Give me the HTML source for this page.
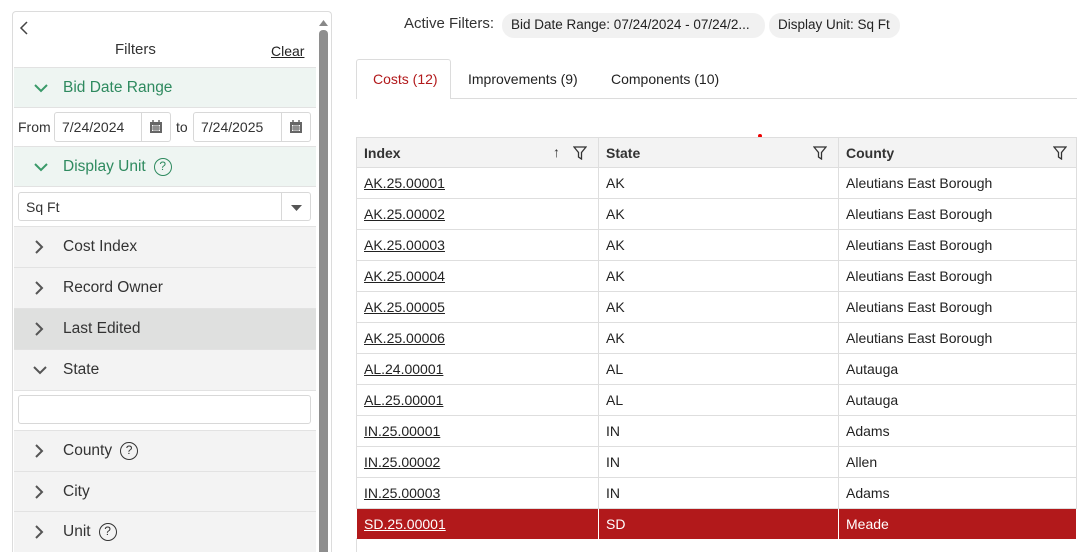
<!DOCTYPE html>
<html style="width:1077px;height:552px;overflow:hidden"><head><style>
*{box-sizing:border-box;margin:0;padding:0}
body{width:1077px;height:552px;overflow:hidden;background:#fff;font-family:"Liberation Sans",sans-serif;font-size:14px;color:#222;position:relative}
.a{position:absolute}
.side{left:12px;top:11px;width:320px;height:541px;border:1px solid #dcdcdc;border-bottom:none;border-radius:4px 4px 0 0;background:#fff}
.row{position:absolute;left:14px;width:302px;border-bottom:1px solid #e2e2e2;background:#f3f3f3;font-size:15.5px;color:#333}
.row .t{position:absolute;left:49px;top:50%;transform:translateY(-50%)}
.row svg{position:absolute;left:20px;top:50%;transform:translateY(-50%)}
.g{background:#eef5f2;color:#2e8a5f}
.w{background:#fff}
.q{display:inline-block;width:18px;height:18px;border:1.5px solid currentColor;border-radius:50%;font-size:12px;text-align:center;line-height:15px;margin-left:8px;vertical-align:1px}
.inp{position:absolute;border:1px solid #d8d8d8;border-radius:3px;background:#fff;font-size:14px}
.cal{position:absolute;right:0;top:0;bottom:0;width:29px;border-left:1px solid #d8d8d8}
table{position:absolute;left:356px;top:137px;width:721px;border-collapse:collapse;font-size:14px}
td,th{border:1px solid #dedede;height:31px;padding:0 7px;text-align:left;font-weight:normal}
th{background:#f3f3f3;height:30px;font-weight:bold;color:#333}
td a{color:#222}
tr.sel td{background:#b2191b;color:#fff;border-color:#fff}
tr.sel td a{color:#fff}
.chip{position:absolute;top:13px;height:25px;background:#f1f1f1;border-radius:12px;font-size:13.5px;padding:4px 9px;white-space:nowrap}
</style></head><body>
<div class="a side"></div>
<div class="a" style="left:318px;top:14px;width:11px;height:10px"><svg width="11" height="10"><path d="M1 9L5.5 3L10 9Z" fill="#888"/></svg></div>
<div class="a" style="left:319px;top:30px;width:9px;height:530px;background:#8e8e8e;border-radius:4px"></div>
<svg class="a" style="left:18px;top:20px" width="12" height="16"><path d="M9 2L3 8L9 14" stroke="#444" stroke-width="1.5" fill="none"/></svg>
<div class="a" style="left:115px;top:41px;font-size:15px;color:#333">Filters</div>
<div class="a" style="left:271px;top:43px;font-size:14px;text-decoration:underline;color:#222">Clear</div>

<div class="row g" style="top:67px;height:41px;border-top:1px solid #e2e2e2"><svg width="14" height="10"><path d="M1 2L7 8L13 2" stroke="#3a9a6a" stroke-width="2" fill="none"/></svg><span class="t">Bid Date Range</span></div>
<div class="row w" style="top:108px;height:39px">
<span class="a" style="left:4px;top:11px;font-size:14px">From</span>
<div class="inp" style="left:40px;top:4px;width:117px;height:30px"><span class="a" style="left:7px;top:6px">7/24/2024</span><div class="cal"><svg style="left:7px" width="14" height="14" viewBox="0 0 14 14"><rect x="1" y="2" width="12" height="11" fill="#666"/><rect x="3" y="5" width="8" height="6" fill="#fff"/><path d="M3 7H11M3 9H11M5 5V11M7 5V11M9 5V11" stroke="#666"/><path d="M4 0V3M10 0V3" stroke="#666" stroke-width="1.5"/></svg></div></div>
<span class="a" style="left:162px;top:11px;font-size:14px">to</span>
<div class="inp" style="left:179px;top:4px;width:118px;height:30px"><span class="a" style="left:7px;top:6px">7/24/2025</span><div class="cal"><svg style="left:7px" width="14" height="14" viewBox="0 0 14 14"><rect x="1" y="2" width="12" height="11" fill="#666"/><rect x="3" y="5" width="8" height="6" fill="#fff"/><path d="M3 7H11M3 9H11M5 5V11M7 5V11M9 5V11" stroke="#666"/><path d="M4 0V3M10 0V3" stroke="#666" stroke-width="1.5"/></svg></div></div>
</div>
<div class="row g" style="top:147px;height:40px"><svg width="14" height="10"><path d="M1 2L7 8L13 2" stroke="#3a9a6a" stroke-width="2" fill="none"/></svg><span class="t">Display Unit<span class="q">?</span></span></div>
<div class="row w" style="top:187px;height:40px"><div class="inp" style="left:4px;top:5px;width:293px;height:29px"><span class="a" style="left:7px;top:6px">Sq Ft</span><div class="cal" style="width:29px"><svg style="position:absolute;left:9px;top:12px;transform:none" width="11" height="6"><path d="M0 0H11L5.5 6Z" fill="#555"/></svg></div></div></div>
<div class="row" style="top:227px;height:41px"><svg width="10" height="14"><path d="M2 1L8 7L2 13" stroke="#555" stroke-width="2" fill="none"/></svg><span class="t">Cost Index</span></div>
<div class="row" style="top:268px;height:41px"><svg width="10" height="14"><path d="M2 1L8 7L2 13" stroke="#555" stroke-width="2" fill="none"/></svg><span class="t">Record Owner</span></div>
<div class="row" style="top:309px;height:41px;background:#dfe0df"><svg width="10" height="14"><path d="M2 1L8 7L2 13" stroke="#555" stroke-width="2" fill="none"/></svg><span class="t">Last Edited</span></div>
<div class="row" style="top:350px;height:41px"><svg width="14" height="10" style="left:19px"><path d="M1 2L7 8L13 2" stroke="#555" stroke-width="2" fill="none"/></svg><span class="t">State</span></div>
<div class="row w" style="top:391px;height:40px"><div class="inp" style="left:4px;top:4px;width:293px;height:29px"></div></div>
<div class="row" style="top:431px;height:41px"><svg width="10" height="14"><path d="M2 1L8 7L2 13" stroke="#555" stroke-width="2" fill="none"/></svg><span class="t">County<span class="q">?</span></span></div>
<div class="row" style="top:472px;height:40px"><svg width="10" height="14"><path d="M2 1L8 7L2 13" stroke="#555" stroke-width="2" fill="none"/></svg><span class="t">City</span></div>
<div class="row" style="top:512px;height:40px;border-bottom:none"><svg width="10" height="14"><path d="M2 1L8 7L2 13" stroke="#555" stroke-width="2" fill="none"/></svg><span class="t">Unit<span class="q">?</span></span></div>

<div class="a" style="left:404px;top:15px;font-size:15px;color:#333">Active Filters:</div>
<div class="chip" style="left:502px;width:263px">Bid Date Range: 07/24/2024 - 07/24/2...</div>
<div class="chip" style="left:769px;width:131px">Display Unit: Sq Ft</div>

<div class="a" style="left:356px;top:59px;width:95px;height:40px;border:1px solid #dcdcdc;border-bottom:none;border-radius:3px 3px 0 0;background:#fff;z-index:2"></div>
<div class="a" style="left:356px;top:98px;width:721px;border-top:1px solid #dcdcdc"></div>
<div class="a" style="left:373px;top:71px;color:#b2191b;z-index:3;font-size:14px">Costs (12)</div>
<div class="a" style="left:468px;top:71px;font-size:14px">Improvements (9)</div>
<div class="a" style="left:611px;top:71px;font-size:14px">Components (10)</div>
<div class="a" style="left:758px;top:134px;width:4px;height:4px;border-radius:50%;background:#e00"></div>

<table>
<colgroup><col style="width:242px"><col style="width:240px"><col></colgroup>
<tr><th style="position:relative">Index<span class="a" style="right:38px;top:6px;font-weight:normal">&#8593;</span><svg class="a" style="right:11px;top:8px" width="14" height="14"><path d="M1 1H13L8.5 6.5V13L5.5 11V6.5Z" stroke="#333" stroke-width="1.3" fill="none"/></svg></th>
<th style="position:relative">State<svg class="a" style="right:11px;top:8px" width="14" height="14"><path d="M1 1H13L8.5 6.5V13L5.5 11V6.5Z" stroke="#333" stroke-width="1.3" fill="none"/></svg></th>
<th style="position:relative">County<svg class="a" style="right:9px;top:8px" width="14" height="14"><path d="M1 1H13L8.5 6.5V13L5.5 11V6.5Z" stroke="#333" stroke-width="1.3" fill="none"/></svg></th></tr>
<tr><td><a href="#">AK.25.00001</a></td><td>AK</td><td>Aleutians East Borough</td></tr>
<tr><td><a href="#">AK.25.00002</a></td><td>AK</td><td>Aleutians East Borough</td></tr>
<tr><td><a href="#">AK.25.00003</a></td><td>AK</td><td>Aleutians East Borough</td></tr>
<tr><td><a href="#">AK.25.00004</a></td><td>AK</td><td>Aleutians East Borough</td></tr>
<tr><td><a href="#">AK.25.00005</a></td><td>AK</td><td>Aleutians East Borough</td></tr>
<tr><td><a href="#">AK.25.00006</a></td><td>AK</td><td>Aleutians East Borough</td></tr>
<tr><td><a href="#">AL.24.00001</a></td><td>AL</td><td>Autauga</td></tr>
<tr><td><a href="#">AL.25.00001</a></td><td>AL</td><td>Autauga</td></tr>
<tr><td><a href="#">IN.25.00001</a></td><td>IN</td><td>Adams</td></tr>
<tr><td><a href="#">IN.25.00002</a></td><td>IN</td><td>Allen</td></tr>
<tr><td><a href="#">IN.25.00003</a></td><td>IN</td><td>Adams</td></tr>
<tr class="sel"><td><a href="#">SD.25.00001</a></td><td>SD</td><td>Meade</td></tr>
</table>
<div class="a" style="left:356px;top:538px;width:1px;height:14px;background:#dedede"></div>
</body></html>
